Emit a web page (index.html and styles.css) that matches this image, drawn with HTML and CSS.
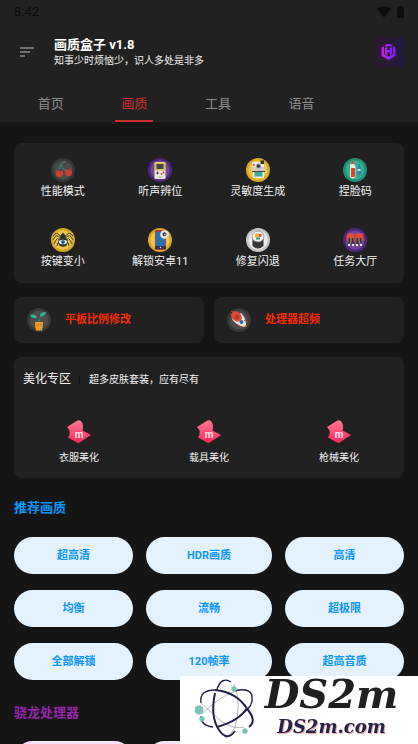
FILE: index.html
```html
<!DOCTYPE html>
<html lang="zh-CN">
<head>
<meta charset="utf-8">
<meta name="viewport" content="width=device-width, initial-scale=1">
<title>画质盒子</title>
<link rel="stylesheet" href="styles.css">
</head>
<body>
<header class="top">
  <div class="status">
    <span>8:42</span>
    <span class="status-icons">
      <svg width="14" height="12" viewBox="0 0 14 12"><path d="M0 2.5Q7-2 14 2.5L7 11.5Z"/></svg>
      <svg width="7" height="12" viewBox="0 0 7 12"><path d="M2 0h3v1h2v11H0V1h2Z"/></svg>
    </span>
  </div>
  <div class="toolbar">
    <button class="menu" type="button" aria-label="菜单">
      <svg width="14" height="10" viewBox="0 0 14 10"><path d="M0 1h14M0 5h10M0 9h5" stroke="#8c8c8c" stroke-width="1.3"/></svg>
    </button>
    <div class="heading">
      <h1>画质盒子 v1.8</h1>
      <p>知事少时烦恼少，识人多处是非多</p>
    </div>
    <svg class="brand" width="30" height="30" viewBox="0 0 30 30">
      <defs>
        <linearGradient id="bg"><stop stop-color="#2a1a2c"/><stop offset=".7" stop-color="#281b3a"/><stop offset="1" stop-color="#211b42"/></linearGradient>
        <linearGradient id="fg"><stop stop-color="#c41fe8"/><stop offset="1" stop-color="#7424f2"/></linearGradient>
      </defs>
      <path fill="url(#bg)" d="M0 0h30v30H0z"/>
      <g fill="url(#fg)">
        <path d="M11 8.5 12.500 7h4L18.500 8.500V10L15 9 11 10Z"/>
        <path d="M7.500 10.500 10 9.500V17L14.500 19.500 19 17V9.500L21.500 10.500V19L14.500 23 7.500 19Z"/>
        <path d="M11 10.500h2.400v2.500h2.400v-2.500h2.400v6.500L16 18.300V15.500h-2.600v2.800L11 17Z"/>
      </g>
    </svg>
  </div>
  <nav class="tabs">
    <a href="#home"><span>首页</span></a>
    <a href="#quality" class="active" aria-current="page"><span>画质</span></a>
    <a href="#tools"><span>工具</span></a>
    <a href="#voice"><span>语音</span></a>
  </nav>
</header>

<main>
  <section class="card features">
    <button type="button">
      <svg class="icon" viewBox="0 0 24 24"><circle cx="12" cy="12" r="12" fill="#383838"/><circle cx="12" cy="12" r="9.500" fill="#4b4b4b"/><path d="M8.500 13Q8 6 14 3.500M10 7q1 5 7 6" fill="none" stroke="#289a83" stroke-width="1"/><circle cx="8.500" cy="15.500" r="3.600" fill="#cf412c"/><circle cx="17.500" cy="14.500" r="3.400" fill="#cf412c"/><path d="M8 13l1-1.500 1 2M16.500 12l1-1 1 1.500" stroke="#7d211b" fill="none"/></svg>
      性能模式
    </button>
    <button type="button">
      <svg class="icon" viewBox="0 0 24 24"><circle cx="12" cy="12" r="12" fill="#4e2879"/><circle cx="12" cy="12" r="9.500" fill="#72459c"/><rect x="6.500" y="4" width="11" height="17" rx="1" fill="#eee8df"/><path d="M7 4.500h10v8H7z" fill="#e0bd48"/><path d="M8.500 6h7v5h-7z" fill="#46443b"/><path d="M8 15h3M9.500 13.500v3" stroke="#4a4a4a"/><circle cx="15.500" cy="14.500" r="1" fill="#da432f"/><circle cx="13.500" cy="16" r="1" fill="#da432f"/><path d="M10 19h5" stroke="#b6b2ad"/></svg>
      听声辨位
    </button>
    <button type="button">
      <svg class="icon" viewBox="0 0 24 24"><circle cx="12" cy="12" r="12" fill="#d9a928"/><circle cx="12" cy="12" r="9.500" fill="#edc64c"/><path d="M6 4h12v5H6z" fill="#eeeae2"/><path d="M14.500 2.500h3.500v3.500h-3.500z" fill="#333"/><path d="M6 9h13v5H6z" fill="#d2cec6"/><circle cx="12.500" cy="8" r="2.500" fill="#999"/><circle cx="12.500" cy="8" r="1.500" fill="#252b30"/><circle cx="8" cy="7" r="1" fill="#db432e"/><path d="M6 13.500h13" stroke="#45413b"/><path d="M7 14h11v6H7z" fill="#f5f1e8"/><path d="M8.500 14h8v4.500h-8z" fill="#34ad94"/></svg>
      灵敏度生成
    </button>
    <button type="button">
      <svg class="icon" viewBox="0 0 24 24"><circle cx="12" cy="12" r="12" fill="#1c9275"/><circle cx="12" cy="12" r="9.500" fill="#35ae90"/><path d="M9.500 1.500 11 6 12.500 8V19q-3 3-5.500 0V7L8.500 5Z" fill="#eee9e1"/><path d="M9.500 1.500 11 6H8Z" fill="#c93f2d"/><path d="M8 10h4v9H8z" fill="#e54b34"/><path d="M8 12h4M8 15h4" stroke="#b93728"/><path d="M15.500 6h1.500v2l1 2v6q-2 2-3.500 0v-6l1-2Z" fill="#307fb8"/><path d="M14.500 11h3v2h-3z" fill="#d8edf0"/></svg>
      捏脸码
    </button>
    <button type="button">
      <svg class="icon" viewBox="0 0 24 24"><circle cx="12" cy="12" r="12" fill="#d8a827"/><circle cx="12" cy="12" r="9.500" fill="#edc64c"/><g fill="none" stroke="#4b4027" stroke-width="1"><path d="M10 9Q7 4 4 6L2 8M10 10Q5 6 4 9l-2 3M9 12Q6 9 5 12l-2 4M9 14q-3 0-3 4M14 9q3-5 6-3l2 2M14 10q5-4 6-1l2 3M15 12q3-3 4 0l2 4M15 14q3 0 3 4"/></g><path d="M12 4.500l2.500 3-.500 3h-4l-.500-3Z" fill="#303238"/><circle cx="12" cy="14" r="4.800" fill="#303238"/><ellipse cx="12" cy="14" rx="4" ry="2.300" fill="#edf2f4"/><circle cx="12" cy="14" r="2" fill="#2b77b2"/><circle cx="12" cy="14" r=".8" fill="#102b42"/></svg>
      按键变小
    </button>
    <button type="button">
      <svg class="icon" viewBox="0 0 24 24"><circle cx="12" cy="12" r="12" fill="#d9a828"/><circle cx="12" cy="12" r="9.500" fill="#edc64c"/><rect x="7" y="2" width="11" height="20" rx="1" fill="#a9433b"/><path d="M8 4h9v14H8z" fill="#2672b3"/><path d="M7 18h11v3H7z" fill="#343946"/><circle cx="12.500" cy="19.500" r=".7" fill="#e8e8e8"/><circle cx="16.500" cy="6.500" r="4.300" fill="#e9e7e4"/><path d="M16.500 4l2.200 1.500-.8 2.600h-2.800l-.8-2.600Z" fill="#363638"/><circle cx="17" cy="6.500" r="1" fill="#bbb"/></svg>
      解锁安卓11
    </button>
    <button type="button">
      <svg class="icon" viewBox="0 0 24 24"><circle cx="12" cy="12" r="12" fill="#c6c6c6"/><circle cx="12" cy="12" r="9.500" fill="#ececec"/><path d="M6.500 9v9q5.500 5 11 0V9" fill="#343434"/><ellipse cx="12" cy="8.500" rx="6" ry="5.500" fill="#f4f3ed" stroke="#777" stroke-width=".7"/><path d="M9 5.500h4v4H9z" fill="#e6b92e"/><path d="M13 6h2.500v3H13z" fill="#e44b34"/><path d="M10 9.500h4v2h-4z" fill="#2ba080"/><path d="M9 16v3M12 17v3M15 16v3" stroke="#484848"/></svg>
      修复闪退
    </button>
    <button type="button">
      <svg class="icon" viewBox="0 0 24 24"><circle cx="12" cy="12" r="12" fill="#4e2879"/><circle cx="12" cy="12" r="9.500" fill="#70459a"/><path d="M4 5.500h7.500v8H5l-1.500-2ZM12.500 5.500H20l.5 6-1.500 2h-6.500Z" fill="#e84c36"/><path d="M5.500 10h5v6h-5zM13.500 10h5v6h-5z" fill="#3a3032"/><path d="M8 10v4l-2 3M16 10v4l2 3" stroke="#dedbd8" stroke-width=".7" fill="none"/><path d="M5 16h2v2H5zM9 16h2v2H9zM13 16h2v2h-2zM17 16h2v2h-2z" fill="#edeae4"/></svg>
      任务大厅
    </button>
  </section>

  <div class="shortcuts">
    <button class="card shortcut" type="button">
      <svg class="icon" viewBox="0 0 24 24"><circle cx="12" cy="12" r="12" fill="#383838"/><circle cx="12" cy="12" r="9.500" fill="#4b4b4b"/><path d="M12 15V10" stroke="#1e947c"/><path d="M3 7q6-2 7 3-5 1-7-3ZM13 9q-1-5 6-5 0 4-6 5Z" fill="#2eb194"/><path d="M8 14h8v3l-1 5.500H9L8 17Z" fill="#f09a2c"/><path d="M8 17h8" stroke="#c97722"/></svg>
      平板比例修改
    </button>
    <button class="card shortcut" type="button">
      <svg class="icon" viewBox="0 0 24 24"><circle cx="12" cy="12" r="12" fill="#383838"/><circle cx="12" cy="12" r="9.500" fill="#4b4b4b"/><path d="M5 11 14 5Q19 10 19 17L17 19Q9 17 5 11Z" fill="#eee9e2"/><ellipse cx="9.500" cy="8.500" rx="6" ry="4.500" transform="rotate(40 9.500 8.500)" fill="#e44d39"/><circle cx="10" cy="9" r="2.500" fill="#b53b2d"/><path d="M4 3l2 1-1 2M17 12l3 2M11 17l3 2" stroke="#d94632"/><circle cx="14.500" cy="14" r="2" fill="#286da8"/><path d="M16 18l3-1 1 2Z" fill="#eda432"/></svg>
      处理器超频
    </button>
  </div>

  <section class="card skins">
    <div class="skins-head">
      <h2>美化专区</h2>
      <p>超多皮肤套装，应有尽有</p>
    </div>
    <div class="skins-grid">
      <button type="button">
        <svg class="icon" viewBox="0 0 24 24"><defs><linearGradient id="pink" x2="0" y2="1"><stop stop-color="#ff7993"/><stop offset="1" stop-color="#ff285d"/></linearGradient></defs><path id="cloth" fill="url(#pink)" d="M0 7 10 .700Q12-.3 14 1.200 17 4 15.500 10.500L24 15 13 22.300Q11.500 23.500 10 22.500L1 17.500Q5 12 0 7Z"/><text class="mark" x="12" y="18">m</text></svg>
        衣服美化
      </button>
      <button type="button">
        <svg class="icon" viewBox="0 0 24 24"><use href="#cloth"/><text class="mark" x="12" y="18">m</text></svg>
        载具美化
      </button>
      <button type="button">
        <svg class="icon" viewBox="0 0 24 24"><use href="#cloth"/><text class="mark" x="12" y="18">m</text></svg>
        枪械美化
      </button>
    </div>
  </section>

  <section class="presets blue">
    <h2>推荐画质</h2>
    <div class="pills">
      <button type="button">超高清</button>
      <button type="button">HDR画质</button>
      <button type="button">高清</button>
      <button type="button">均衡</button>
      <button type="button">流畅</button>
      <button type="button">超极限</button>
      <button type="button">全部解锁</button>
      <button type="button">120帧率</button>
      <button type="button">超高音质</button>
    </div>
  </section>

  <section class="presets purple">
    <h2>骁龙处理器</h2>
    <div class="pills">
      <button type="button" aria-label="处理器一"></button>
      <button type="button" aria-label="处理器二"></button>
      <button type="button" aria-label="处理器三"></button>
    </div>
  </section>
</main>

<aside class="watermark">
  <svg width="60" height="62" viewBox="0 0 60 62" fill="none">
    <g stroke="#999" stroke-width=".7"><path d="M6 25 26 43Q39 52 49 49M7 36Q25 18 39 14M39 6Q47 25 40 49 35 58 30 60"/></g>
    <g stroke="#20214a" stroke-width="1.400">
      <path d="M22 11Q27-2 36 4M6 25Q4 11 22 12M39 13Q55 9 57 18 59 28 47 36M6 38Q5 47 18 49"/>
      <path stroke-width="2" d="M20 12Q42 14 53 32M53 32Q62 43 54 49M52 30Q44 43 22 49M20 15Q15 39 24 52 32 64 40 53"/>
    </g>
    <g fill="#77c3b6"><circle cx="4" cy="32" r="4.500"/><circle cx="7" cy="41" r="2.700"/><circle cx="39" cy="11" r="2.700"/><circle cx="50" cy="53" r="2.700"/></g>
  </svg>
  <div class="wordmark">
    <strong>DS2m</strong>
    <em>DS2m.com</em>
  </div>
</aside>
</body>
</html>
```
FILE: styles.css
```css
* {
  box-sizing: border-box;
}

html {
  scrollbar-width: none;
}

body {
  margin: 0;
  background: #151515;
  color: #f2f2f2;
  font: 11px/16px Roboto, "Noto Sans CJK SC", sans-serif;
}

h1, h2, p {
  margin: 0;
}

button {
  padding: 0;
  border: 0;
  background: none;
  color: inherit;
  font: inherit;
}

.top {
  background: #212121;
}

.status {
  display: flex;
  align-items: center;
  justify-content: space-between;
  height: 24px;
  padding: 0 14px;
  color: #0c0c0c;
  font-size: 13px;
}

.status-icons {
  display: flex;
  gap: 6px;
  fill: #0c0c0c;
}

.toolbar {
  display: flex;
  align-items: center;
  height: 56px;
  padding: 0 14px 0 20px;
}

.menu {
  display: flex;
}

.heading {
  flex: 1;
  margin-left: 20px;
  padding-top: 2px;
}

.heading h1 {
  color: #fff;
  font-size: 13px;
  font-weight: 700;
}

.heading p {
  font-size: 10px;
}

.tabs {
  display: flex;
  height: 42px;
  padding-left: 9px;
}

.tabs a {
  display: flex;
  flex: 0 0 20vw;
  justify-content: center;
  color: #8c8c8c;
  font-size: 13px;
  text-decoration: none;
}

.tabs span {
  padding: 16px 6px 0;
  border-bottom: 2px solid transparent;
}

.tabs .active {
  color: #c62f2d;
}

.tabs .active span {
  border-color: #c62f2d;
}

main {
  display: grid;
  gap: 14px;
  padding: 21px 14px 0;
}

.card {
  border-radius: 8px;
  background: #212121;
}

.icon {
  display: block;
  width: 24px;
  height: 24px;
  overflow: visible;
}

.features {
  display: grid;
  grid-template-columns: repeat(4, 1fr);
  gap: 28px 0;
  padding: 15px 0 13px;
}

.features button,
.skins-grid button {
  display: flex;
  flex-direction: column;
  align-items: center;
  gap: 2px;
}

.shortcuts {
  display: grid;
  grid-template-columns: 1fr 1fr;
  gap: 10px;
}

.shortcut {
  display: flex;
  align-items: center;
  gap: 14px;
  height: 46px;
  padding: 0 13px;
  color: #f52b06;
  font-weight: 700;
}

.skins {
  padding: 14px 0 12px;
}

.skins-head {
  display: flex;
  align-items: center;
  padding-left: 9px;
}

.skins-head h2 {
  font-size: 12px;
  font-weight: 400;
}

.skins-head p {
  margin-left: 8px;
  padding-left: 9px;
  border-left: 1px solid #111;
  font-size: 10px;
  line-height: 9px;
}

.skins-grid {
  display: grid;
  grid-template-columns: repeat(3, 1fr);
  margin-top: 33px;
  font-size: 10px;
}

.skins-grid button {
  gap: 6px;
}

.mark {
  fill: #ffe3e9;
  font: 700 10px Roboto, sans-serif;
  text-anchor: middle;
}

.presets h2 {
  margin: 8px 0 21px;
  font-size: 13px;
  font-weight: 700;
  line-height: 16px;
}

.pills {
  display: grid;
  grid-template-columns: 119fr 126fr 119fr;
  gap: 16px 13px;
}

.pills button {
  height: 37px;
  border-radius: 19px;
  font-weight: 700;
}

.blue {
  color: #0c96fa;
}

.blue button {
  background: #e3f2fd;
}

.purple {
  color: #9526aa;
}

.purple h2 {
  margin: 11px 0 20px;
}

.purple button {
  background: #f3e5f5;
}

.watermark {
  position: fixed;
  right: 0;
  bottom: 0;
  display: flex;
  gap: 4px;
  width: 238px;
  height: 68px;
  padding: 2px 14px 0 15px;
  background: #fff;
}

.wordmark {
  display: flex;
  flex: 1;
  flex-direction: column;
  align-items: center;
  font-family: "DejaVu Serif", serif;
  font-style: italic;
  white-space: nowrap;
}

.wordmark strong {
  color: #202020;
  font-size: 40px;
  line-height: 32px;
}

.wordmark em {
  color: #24234e;
  font-size: 18px;
  font-weight: 700;
  line-height: 34px;
  text-shadow: 1px 1px #efaaa5;
}
```
